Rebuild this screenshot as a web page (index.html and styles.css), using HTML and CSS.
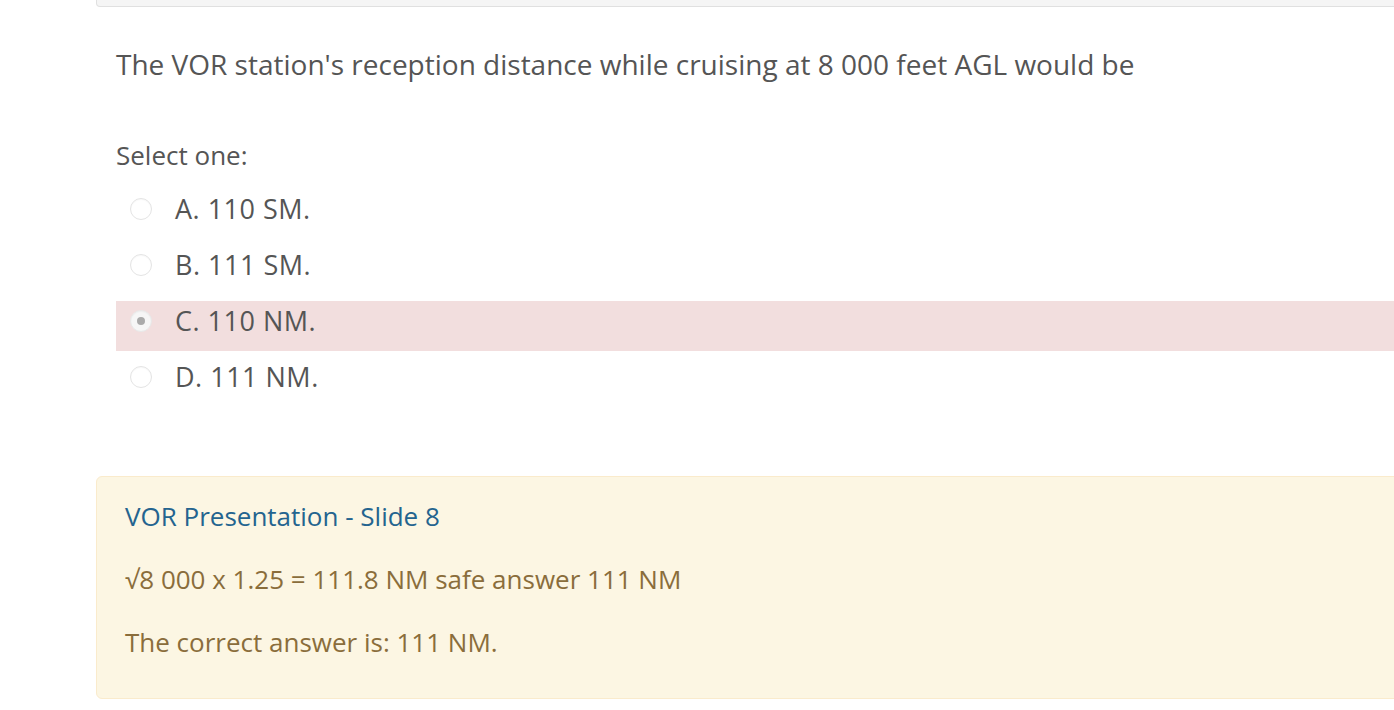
FILE: index.html
```html
<!DOCTYPE html>
<html>
<head>
<meta charset="utf-8">
<link rel="stylesheet" href="styles.css">
</head>
<body>
<div class="page">
  <div class="info-box"></div>
  <div class="content">
    <div class="qtext">The VOR station's reception distance while cruising at 8 000 feet AGL would be</div>
    <div class="ablock">
      <div class="prompt">Select one:</div>
      <div class="answers">
        <div class="opt"><span class="radio"></span><span class="label">A. 110 SM.</span></div>
        <div class="opt"><span class="radio"></span><span class="label">B. 111 SM.</span></div>
        <div class="opt incorrect"><span class="radio checked"></span><span class="label">C. 110 NM.</span></div>
        <div class="opt"><span class="radio"></span><span class="label">D. 111 NM.</span></div>
      </div>
    </div>
  </div>
  <div class="feedback">
    <p class="fb-link"><a href="#">VOR Presentation - Slide 8</a></p>
    <p>√8 000 x 1.25 = 111.8 NM safe answer 111 NM</p>
    <p>The correct answer is: 111 NM.</p>
  </div>
</div>
</body>
</html>
```

FILE: styles.css
```css
html, body {
  margin: 0;
  padding: 0;
  background: #fff;
  overflow: hidden;
}
body {
  font-family: "Open Sans", "Liberation Sans", sans-serif;
  color: #555;
  width: 1394px;
  height: 710px;
}
.page {
  margin-left: 96px;
  width: 1400px;
}
.info-box {
  height: 7px;
  margin-top: -1px;
  background: #f5f5f5;
  border: 1px solid #e0e0e0;
  border-top: none;
  border-bottom-left-radius: 4px;
}
.content {
  padding-left: 20px;
}
.qtext {
  font-size: 28px;
  line-height: 40px;
  color: #555;
  margin-top: 37px;
}
.ablock {
  margin-top: 55px;
}
.prompt {
  font-size: 26px;
  line-height: 32px;
  color: #555;
}
.answers {
  margin-top: 18px;
}
.opt {
  display: flex;
  align-items: center;
  height: 50px;
  margin-bottom: 6px;
  font-size: 27px;
  letter-spacing: 0.5px;
}
.opt .label {
  position: relative;
  top: -6px;
}
.opt.incorrect {
  background: #f2dede;
}
.radio {
  width: 22px;
  height: 22px;
  border-radius: 50%;
  border: 1px solid #e4e4e4;
  background: #fff;
  margin-left: 14px;
  margin-right: 23px;
  position: relative;
  top: -5px;
  box-sizing: border-box;
  display: flex;
  align-items: center;
  justify-content: center;
  box-shadow: inset 0 1px 1px rgba(0,0,0,0.03);
  flex: none;
}
.radio.checked {
  background: #f6f6f6;
  border-color: #e8e8e8;
}
.radio.checked::after {
  content: "";
  width: 8px;
  height: 8px;
  border-radius: 50%;
  background: #aaa;
}
.feedback {
  margin-top: 69px;
  background: #fcf6e3;
  border: 1px solid #faebcc;
  border-radius: 6px;
  padding: 23px 28px 22px 28px;
  color: #8a6d3b;
  font-size: 26px;
  height: 176px;
}
.feedback p {
  margin: 0 0 30px 0;
  line-height: 33px;
}
.feedback a {
  color: #24648f;
  text-decoration: none;
}
```
